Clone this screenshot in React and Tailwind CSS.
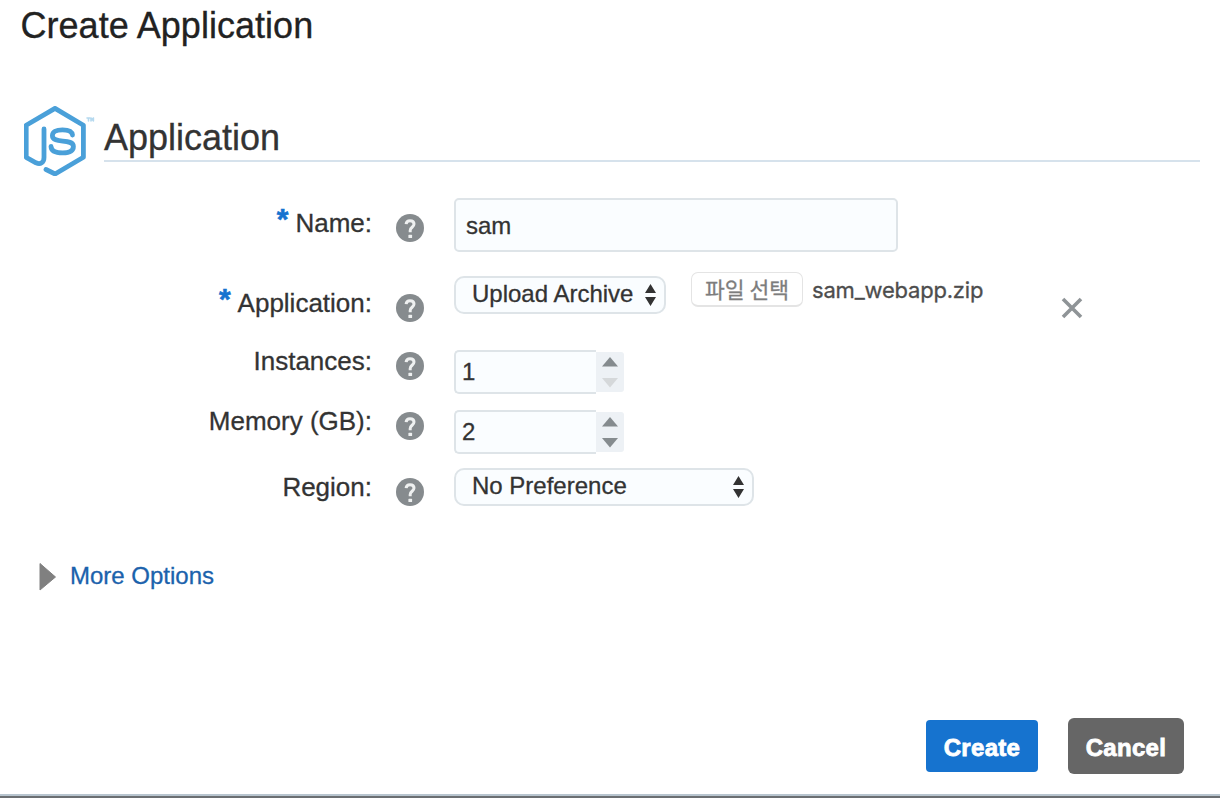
import React from "react";

function NodeLogo() {
  return (
    <svg width="72" height="70" viewBox="0 0 72 70" className="block shrink-0" fill="none" stroke="#4aa0d9" strokeWidth="4.8" strokeLinejoin="round" strokeLinecap="round">
      <path d="M22 63.5 31 68 59.4 51.3V19.2L31 2.4 2.2 19.2V51.3L12 56.8C16.5 58.8 20 56.5 20 51.5V23" />
      <path d="M48.5 29C48 24.6 44 23.8 38.5 23.8 32 23.8 28.4 25.7 28.4 29.8 28.4 38.5 49.4 31.5 49.4 40.5 49.4 45.5 44.8 46.9 38.7 46.9 32 46.9 27.3 45.6 27 40.3" />
      <g stroke="#b5d9ef" strokeWidth="1.6">
        <path d="M63 12h3M64.5 12v3M67 15v-3l1.2 1.8 1.2-1.8v3" />
      </g>
    </svg>
  );
}

function HelpIcon({ className }) {
  return (
    <svg width="28" height="28" viewBox="0 0 28 28" className={"ml-[25px] block shrink-0 " + className}>
      <circle cx="14" cy="14" r="14" fill="#868b8e" />
      <path d="M10.1 10.2C10.3 8 11.7 6.8 14 6.8c2.4 0 4 1.2 4 3.2 0 3.2-3.8 3.3-3.8 6.4v1.8" fill="none" stroke="#eef0f0" strokeWidth="3" />
      <rect x="12.4" y="20.8" width="3.7" height="3.3" rx=".6" fill="#eef0f0" />
    </svg>
  );
}

function Row({ label, required, labelTop, iconTop, className, children }) {
  return (
    <div className={"flex items-start " + className}>
      <div className={"flex w-[371px] shrink-0 justify-end text-[26px] leading-[30px] whitespace-nowrap " + labelTop}>
        {required && <span className="mt-[-4px] mr-[7px] text-[30px] font-bold text-[#1673cf] [-webkit-text-stroke:0.6px_#1673cf]">*</span>}
        <span className="mr-[-1px]">{label}</span>
      </div>
      <HelpIcon className={iconTop} />
      <div className="ml-[30px] flex items-start">{children}</div>
    </div>
  );
}

function Select({ value, className }) {
  return (
    <div className={"flex h-[38px] justify-between rounded-[10px] border-2 border-[#dee4e8] bg-[#fafdff] pl-[16px] " + className}>
      <span className="mt-[2px] text-[24px] leading-[28px] whitespace-nowrap">{value}</span>
      <svg width="12" height="24" viewBox="0 0 12 24" className="mt-[5px] mr-[7px] shrink-0" fill="#333">
        <path d="M5.5 1 11 10H0ZM5.5 23 11 14H0Z" />
      </svg>
    </div>
  );
}

function Stepper({ value, downColor }) {
  return (
    <div className="flex">
      <div className="h-[44px] w-[142px] rounded-l-[5px] border-2 border-r-0 border-[#dee4e8] bg-[#fafdff] pt-[6px] pl-[6px] text-[24px] leading-[28px]">
        {value}
      </div>
      <div className="mt-[2px] h-[40px] w-[28px] rounded-r-[3px] bg-[#edf1f5]">
        <svg width="28" height="40" viewBox="0 0 28 40">
          <path d="M14 5 22 14.5H6Z" fill="#858b8e" />
          <path d="M14 35.5 22 26H6Z" fill={downColor} />
        </svg>
      </div>
    </div>
  );
}

export default function App() {
  return (
    <div className="flex h-[798px] w-[1220px] flex-col overflow-hidden bg-white font-['Liberation_Sans',Arial,sans-serif] text-[#333] [-webkit-text-stroke:0.3px]">
      <h1 className="mt-[6px] ml-[20.5px] text-[36px] leading-[40px] tracking-[0.03px] text-[#222]">Create Application</h1>

      <div className="mt-[60px] ml-[24px] flex h-[70px]">
        <NodeLogo />
        <h2 className="ml-[8px] h-[56px] w-[1096px] border-b-2 border-[#d6e2ec] pt-[12px] text-[36px] leading-[40px]">Application</h2>
      </div>

      <div className="mt-[22px]">
        <Row label="Name:" required labelTop="mt-[10px]" iconTop="mt-[16px]" className="h-[74px]">
          <div className="h-[54px] w-[444px] rounded-[5px] border-2 border-[#dee4e8] bg-[#fafdff] pt-[12px] pl-[10px] text-[24px] leading-[28px]">sam</div>
        </Row>
        <Row label="Application:" required labelTop="mt-[16px]" iconTop="mt-[22px]" className="h-[78px]">
          <Select value="Upload Archive" className="mt-[4px] w-[212px]" />
          <div className="ml-[25px] h-[35px] w-[112px] rounded-[7px] border border-b-2 border-[#e4e4e4] pt-[2px] text-center font-['Noto_Sans_CJK_KR',sans-serif] text-[21.5px] leading-[28px] whitespace-nowrap text-[#7d7d7d]">
            파일 선택
          </div>
          <span className="mt-[4px] ml-[9px] w-[249px] font-['Inter',sans-serif] text-[22px] leading-[28px] tracking-[-0.2px] text-[#4d4d4d]">sam_webapp.zip</span>
          <svg width="22" height="22" viewBox="0 0 22 22" className="mt-[25px] block">
            <path d="M2 2 20 20M20 2 2 20" stroke="#8f9497" strokeWidth="3.6" fill="none" />
          </svg>
        </Row>
        <Row label="Instances:" labelTop="mt-[-4px]" iconTop="mt-[2px]" className="h-[60px]">
          <Stepper value="1" downColor="#d5d8da" />
        </Row>
        <Row label="Memory (GB):" labelTop="mt-[-4px]" iconTop="mt-[2px]" className="h-[58px]">
          <Stepper value="2" downColor="#858b8e" />
        </Row>
        <Row label="Region:" labelTop="mt-[4px]" iconTop="mt-[10px]" className="h-[38px]">
          <Select value="No Preference" className="w-[300px]" />
        </Row>
      </div>

      <div className="mt-[56px] ml-[39px] flex h-[30px]">
        <svg width="17" height="30" viewBox="0 0 17 30" className="block">
          <path d="M1 1.5 16.5 15 1 28Z" fill="#808080" stroke="#808080" />
        </svg>
        <span className="ml-[14px] text-[24px] leading-[28px] text-[#1b62ac]">More Options</span>
      </div>

      <div className="mt-auto mb-[20px] flex items-center justify-end gap-[30px] pr-[36px] text-[24px] font-bold tracking-[0.3px] text-white [-webkit-text-stroke:0.8px]">
        <button className="h-[52px] w-[112px] rounded-[4px] bg-[#1673cf] pt-[4px]">Create</button>
        <button className="h-[56px] w-[116px] rounded-[6px] bg-[#666] pt-[4px]">Cancel</button>
      </div>
      <div className="h-[4px] shrink-0 border-t-2 border-[#b8c5cf] bg-[#6b6f72]" />
    </div>
  );
}
